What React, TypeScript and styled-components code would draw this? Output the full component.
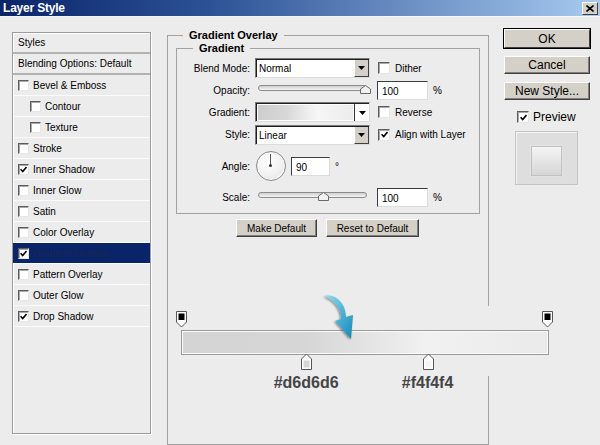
import styled, { createGlobalStyle } from 'styled-components';

const GlobalStyle = createGlobalStyle`
    html, body {
        margin: 0;
        padding: 0;
        background: #ececec;
    }
    body {
        font-family: "Liberation Sans", Arial, sans-serif;
        font-size: 10px;
        color: #000;
    }
`;

const Window = styled.div`
    position: relative;
    width: 600px;
    height: 445px;
    overflow: hidden;
    background: #ececec;
`;

const TitleBar = styled.div`
    height: 16px;
    display: flex;
    align-items: center;
    justify-content: space-between;
    padding: 0 2px 0 3px;
    background: linear-gradient(90deg, #0a246a 0%, #2d5296 35%, #6f93c6 70%, #a6caf0 100%);
    border-bottom: 1px solid #f6f6f6;
`;

const Title = styled.span`
    color: #fff;
    font-weight: bold;
    font-size: 12px;
    letter-spacing: -0.2px;
`;

const CloseBtn = styled.span`
    width: 16px;
    height: 13px;
    box-sizing: border-box;
    display: flex;
    align-items: center;
    justify-content: center;
    background: #d4d0c8;
    border: 1px solid;
    border-color: #fff #404040 #404040 #fff;
`;

const Body = styled.div`
    display: flex;
    align-items: flex-start;
    padding: 12px 0 0 12px;
`;

const StylesList = styled.div`
    width: 139px;
    height: 402px;
    margin-top: 3px;
    box-sizing: border-box;
    border: 1px solid #9c9c9c;
    box-shadow: 1px 1px 0 #fff, inset 1px 1px 0 #fff;
    flex: none;
`;

const StyleRow = styled.div<{ $indent?: boolean; $active?: boolean; $head?: boolean }>`
    height: 21px;
    box-sizing: border-box;
    display: flex;
    align-items: center;
    gap: 4px;
    padding-left: ${(p) => (p.$indent ? 17 : 5)}px;
    background: ${(p) => (p.$active ? '#0a246a' : 'transparent')};
    color: ${(p) => (p.$active ? '#1a2752' : '#000')};
    border-bottom: ${(p) => (p.$head ? '2px solid #b2b2b2' : '1px solid #fbfbfb')};
`;

const Box = styled.span<{ $size: number }>`
    display: inline-flex;
    align-items: center;
    justify-content: center;
    flex: none;
    width: ${(p) => p.$size}px;
    height: ${(p) => p.$size}px;
    box-sizing: border-box;
    background: #fff;
    border: 1px solid;
    border-color: #5c5c5c #e6e6e6 #e6e6e6 #5c5c5c;
    box-shadow: inset 1px 1px 0 #a8a8a8;
`;

const CheckBox = ({ on, size = 11 }: { on?: boolean; size?: number }) => (
    <Box $size={size}>
        {on && (
            <svg width="7" height="7" viewBox="0 0 7 7">
                <path d="M0.6 3.3 L2.7 5.5 L6.5 1" fill="none" stroke="#000" strokeWidth="1.6" />
            </svg>
        )}
    </Box>
);

const Middle = styled.div`
    width: 322px;
    margin-left: 16px;
    flex: none;
`;

const Group = styled.fieldset<{ $legendAt: number; $pad: string; $h?: number }>`
    margin: 0;
    min-width: 0;
    padding: ${(p) => p.$pad};
    border: 1px solid #a2a2a2;
    ${(p) => (p.$h ? `height: ${p.$h}px; box-sizing: border-box;` : '')}

    & > legend {
        margin-left: ${(p) => p.$legendAt}px;
        padding: 0 6px;
        font-weight: bold;
        font-size: 11px;
        line-height: 13px;
    }
`;

const Form = styled.div`
    display: grid;
    grid-template-columns: 69px 115px auto;
    grid-template-rows: 22px 22px 22px 23px 40px 22px;
    column-gap: 5px;
    align-items: center;
`;

const Label = styled.span`
    text-align: right;
`;

const Extra = styled.div`
    display: flex;
    align-items: center;
    gap: 5px;
    margin-left: 2px;
`;

const OptionCheck = styled.label`
    display: flex;
    align-items: center;
    gap: 5px;
    margin-left: 3px;
`;

const Select = styled.div`
    height: 20px;
    box-sizing: border-box;
    display: flex;
    background: #fff;
    border: 1px solid;
    border-color: #7a7a7a #dcdcdc #dcdcdc #7a7a7a;
    box-shadow: inset 1px 1px 0 #1e1e1e;
`;

const SelectText = styled.span`
    flex: 1;
    padding: 4px 0 0 3px;
`;

const DropBtn = styled.span<{ $flat?: boolean }>`
    width: 15px;
    box-sizing: border-box;
    display: flex;
    align-items: center;
    justify-content: center;
    margin: 1px 0 0 0;
    background: ${(p) => (p.$flat ? '#fff' : '#d4d0c8')};
    border-left: 1px solid ${(p) => (p.$flat ? '#333' : '#fff')};
    ${(p) => (p.$flat ? '' : 'border-right: 1px solid #404040; border-bottom: 1px solid #404040;')}
`;

const Swatch = styled.span`
    flex: 1;
    margin: 2px 1px 1px 2px;
    background: linear-gradient(90deg, #cdcdcd 0%, #d8d8d8 30%, #f6f6f6 62%, #ececec 100%);
`;

const Triangle = () => (
    <svg width="7" height="4" viewBox="0 0 7 4">
        <path d="M0 0 H7 L3.5 4 Z" fill="#000" />
    </svg>
);

const Field = styled.div<{ $w: number }>`
    width: ${(p) => p.$w}px;
    height: 19px;
    box-sizing: border-box;
    padding: 4px 0 0 4px;
    background: #fff;
    border: 1px solid;
    border-color: #3c3c3c #dcdcdc #dcdcdc #3c3c3c;
`;

const Slider = styled.div`
    position: relative;
    height: 12px;
    margin: 0 3px;
`;

const Track = styled.div`
    height: 4px;
    margin-top: 1px;
    border-radius: 3px;
    border: 1px solid #8d8d8d;
    background: linear-gradient(#cfcfcf, #f4f4f4);
`;

const Thumb = styled.svg`
    position: absolute;
    top: 1px;
    margin-left: -5px;
`;

const AngleRow = styled.div`
    display: flex;
    align-items: center;
    gap: 5px;
`;

const Dial = styled.div`
    position: relative;
    width: 30px;
    height: 30px;
    box-sizing: border-box;
    margin-left: 1px;
    border-radius: 50%;
    border: 1px solid #8a8a8a;
    background: radial-gradient(circle at 40% 35%, #ffffff 0%, #f1f1f1 55%, #d9d9d9 100%);
    box-shadow: inset -1px -1px 1px #fff;
`;

const Hand = styled.span`
    position: absolute;
    left: 13px;
    top: 2px;
    width: 1px;
    height: 12px;
    background: #555;
`;

const Pivot = styled.span`
    position: absolute;
    left: 12px;
    top: 12px;
    width: 3px;
    height: 3px;
    border-radius: 50%;
    background: #333;
`;

const ButtonRow = styled.div`
    display: flex;
    justify-content: center;
    gap: 9px;
    margin: 5px 0 0 -1px;
`;

const Button = styled.button<{ $w: number; $main?: boolean; $size?: number }>`
    width: ${(p) => p.$w}px;
    height: ${(p) => (p.$main ? 19 : 18)}px;
    padding: 0;
    font-family: "Liberation Sans", Arial, sans-serif;
    font-size: ${(p) => p.$size ?? 10}px;
    color: #000;
    background: #d4d0c8;
    border: 1px solid;
    border-color: #fff #404040 #404040 #fff;
    box-shadow: ${(p) => (p.$main ? '0 0 0 1px #000' : 'inset -1px -1px 0 #808080')};
`;

const RightCol = styled.div`
    width: 86px;
    margin-left: 15px;
    display: flex;
    flex-direction: column;
    gap: 8px;
    flex: none;
`;

const PreviewCheck = styled.label`
    display: flex;
    align-items: center;
    gap: 4px;
    margin: 2px 0 0 13px;
    font-size: 12px;
`;

const PreviewBox = styled.div`
    width: 63px;
    height: 54px;
    margin: -1px 0 0 11px;
    box-sizing: border-box;
    display: flex;
    align-items: center;
    justify-content: center;
    padding-top: 6px;
    background: #dedede;
    border: 1px solid #c4c4c4;
    box-shadow: inset 1px 1px 0 #f4f4f4;
`;

const PreviewSquare = styled.div`
    width: 31px;
    height: 30px;
    box-sizing: border-box;
    border: 1px solid #c2c2c2;
    background: linear-gradient(#f4f4f4, #d6d6d6);
    box-shadow: 0 0 1px #f8f8f8;
`;

const Editor = styled.div`
    position: absolute;
    left: 176px;
    top: 306px;
    width: 382px;
    height: 70px;
    padding: 5px 0 0 5px;
    box-sizing: border-box;
    background: #ececec;
`;

const StopLane = styled.div`
    position: relative;
    width: 368px;
    height: 17px;
`;

const Stop = styled.svg`
    position: absolute;
    top: 0;
    margin-left: -5px;
`;

const Bar = styled.div`
    width: 368px;
    height: 25px;
    margin: 2px 0 0;
    box-sizing: border-box;
    border: 1px solid #9a9a9a;
    box-shadow: inset 0 0 0 1px #fafafa;
    background: linear-gradient(90deg, #d4d4d4 0%, #d6d6d6 34%, #f1f1f1 67%, #eaeaea 100%);
`;

const ColorLane = styled(StopLane)`
    margin-top: -2px;
`;

const HexLabel = styled.span`
    position: absolute;
    top: 4px;
    transform: translateX(-50%);
    font-family: "Liberation Sans", Arial, sans-serif;
    font-weight: bold;
    font-size: 16px;
    color: #454545;
    white-space: nowrap;
`;

const Arrow = styled.svg`
    position: absolute;
    left: 146px;
    top: -13px;
    overflow: visible;
`;

const styleItems: { name: string; on?: boolean; indent?: boolean; active?: boolean }[] = [
    { name: 'Bevel & Emboss' },
    { name: 'Contour', indent: true },
    { name: 'Texture', indent: true },
    { name: 'Stroke' },
    { name: 'Inner Shadow', on: true },
    { name: 'Inner Glow' },
    { name: 'Satin' },
    { name: 'Color Overlay' },
    { name: 'Gradient Overlay', on: true, active: true },
    { name: 'Pattern Overlay' },
    { name: 'Outer Glow' },
    { name: 'Drop Shadow', on: true },
];

const colorStops = [
    { at: 34, color: '#d6d6d6' },
    { at: 67, color: '#f4f4f4' },
];

const SliderControl = ({ value }: { value: number }) => (
    <Slider>
        <Track />
        <Thumb width="11" height="9" viewBox="0 0 11 9" style={{ left: `${value}%` }}>
            <path d="M0.5 8.5 V4 L5.5 0.5 L10.5 4 V8.5 Z" fill="#f2f2f2" stroke="#6a6a6a" />
        </Thumb>
    </Slider>
);

const App = () => {
    return (
        <Window>
            <GlobalStyle />
            <TitleBar>
                <Title>Layer Style</Title>
                <CloseBtn>
                    <svg width="8" height="7" viewBox="0 0 8 7">
                        <path d="M0.5 0.5 L7.5 6.5 M7.5 0.5 L0.5 6.5" stroke="#000" strokeWidth="1.6" />
                    </svg>
                </CloseBtn>
            </TitleBar>

            <Body>
                <StylesList>
                    <StyleRow $head>Styles</StyleRow>
                    <StyleRow $head>Blending Options: Default</StyleRow>
                    {styleItems.map((s) => (
                        <StyleRow key={s.name} $indent={s.indent} $active={s.active}>
                            <CheckBox on={s.on} />
                            <span>{s.name}</span>
                        </StyleRow>
                    ))}
                </StylesList>

                <Middle>
                    <Group $legendAt={7} $pad="0 8px" $h={416}>
                        <legend>Gradient Overlay</legend>
                        <Group $legendAt={12} $pad="2px 4px 5px">
                            <legend>Gradient</legend>
                            <Form>
                                <Label>Blend Mode:</Label>
                                <Select>
                                    <SelectText>Normal</SelectText>
                                    <DropBtn>
                                        <Triangle />
                                    </DropBtn>
                                </Select>
                                <OptionCheck>
                                    <CheckBox size={12} />
                                    Dither
                                </OptionCheck>

                                <Label>Opacity:</Label>
                                <SliderControl value={98} />
                                <Extra>
                                    <Field $w={51}>100</Field>%
                                </Extra>

                                <Label>Gradient:</Label>
                                <Select>
                                    <Swatch />
                                    <DropBtn $flat>
                                        <Triangle />
                                    </DropBtn>
                                </Select>
                                <OptionCheck>
                                    <CheckBox size={12} />
                                    Reverse
                                </OptionCheck>

                                <Label>Style:</Label>
                                <Select>
                                    <SelectText>Linear</SelectText>
                                    <DropBtn>
                                        <Triangle />
                                    </DropBtn>
                                </Select>
                                <OptionCheck>
                                    <CheckBox size={12} on />
                                    Align with Layer
                                </OptionCheck>

                                <Label>Angle:</Label>
                                <AngleRow>
                                    <Dial>
                                        <Hand />
                                        <Pivot />
                                    </Dial>
                                    <Field $w={39}>90</Field>
                                    <span>°</span>
                                </AngleRow>
                                <span />

                                <Label>Scale:</Label>
                                <SliderControl value={60} />
                                <Extra>
                                    <Field $w={51}>100</Field>%
                                </Extra>
                            </Form>
                        </Group>
                        <ButtonRow>
                            <Button $w={81}>Make Default</Button>
                            <Button $w={93}>Reset to Default</Button>
                        </ButtonRow>
                    </Group>
                </Middle>

                <RightCol>
                    <Button $w={86} $main $size={12}>
                        OK
                    </Button>
                    <Button $w={86} $size={12}>
                        Cancel
                    </Button>
                    <Button $w={86} $size={12}>
                        New Style...
                    </Button>
                    <PreviewCheck>
                        <CheckBox size={12} on />
                        Preview
                    </PreviewCheck>
                    <PreviewBox>
                        <PreviewSquare />
                    </PreviewBox>
                </RightCol>
            </Body>

            <Editor>
                <Arrow width="34" height="50" viewBox="0 0 34 50">
                    <defs>
                        <linearGradient id="arr" x1="0" y1="0" x2="1" y2="1">
                            <stop offset="0" stopColor="#8fdcf2" />
                            <stop offset="1" stopColor="#1289b8" />
                        </linearGradient>
                        <filter id="sh" x="-40%" y="-40%" width="180%" height="180%">
                            <feDropShadow dx="-1" dy="1" stdDeviation="1.2" floodColor="#000" floodOpacity="0.45" />
                        </filter>
                    </defs>
                    <path
                        d="M2 3 C 12 0, 24 9, 24 24 L 31 22 L 29 46 L 13 28 L 19 26 C 19 15, 12 7, 2 3 Z"
                        fill="url(#arr)"
                        filter="url(#sh)"
                    />
                </Arrow>
                <StopLane>
                    {[0, 99.5].map((at) => (
                        <Stop key={at} width="11" height="17" viewBox="0 0 11 17" style={{ left: `${at}%` }}>
                            <path d="M0.5 0.5 H10.5 V11 L5.5 16 L0.5 11 Z" fill="#fff" stroke="#555" />
                            <rect x="2.5" y="2.5" width="6" height="6.5" fill="#000" />
                        </Stop>
                    ))}
                </StopLane>
                <Bar />
                <ColorLane>
                    {colorStops.map((s) => (
                        <Stop key={s.at} width="11" height="17" viewBox="0 0 11 17" style={{ left: `${s.at}%` }}>
                            <path d="M0.5 16.5 V6 L5.5 1 L10.5 6 V16.5 Z" fill="#fff" stroke="#555" />
                            <rect x="2.5" y="7.5" width="6" height="7" fill={s.color} />
                        </Stop>
                    ))}
                </ColorLane>
                <StopLane>
                    {colorStops.map((s) => (
                        <HexLabel key={s.at} style={{ left: `${s.at}%` }}>
                            {s.color}
                        </HexLabel>
                    ))}
                </StopLane>
            </Editor>
        </Window>
    );
};

export default App;
